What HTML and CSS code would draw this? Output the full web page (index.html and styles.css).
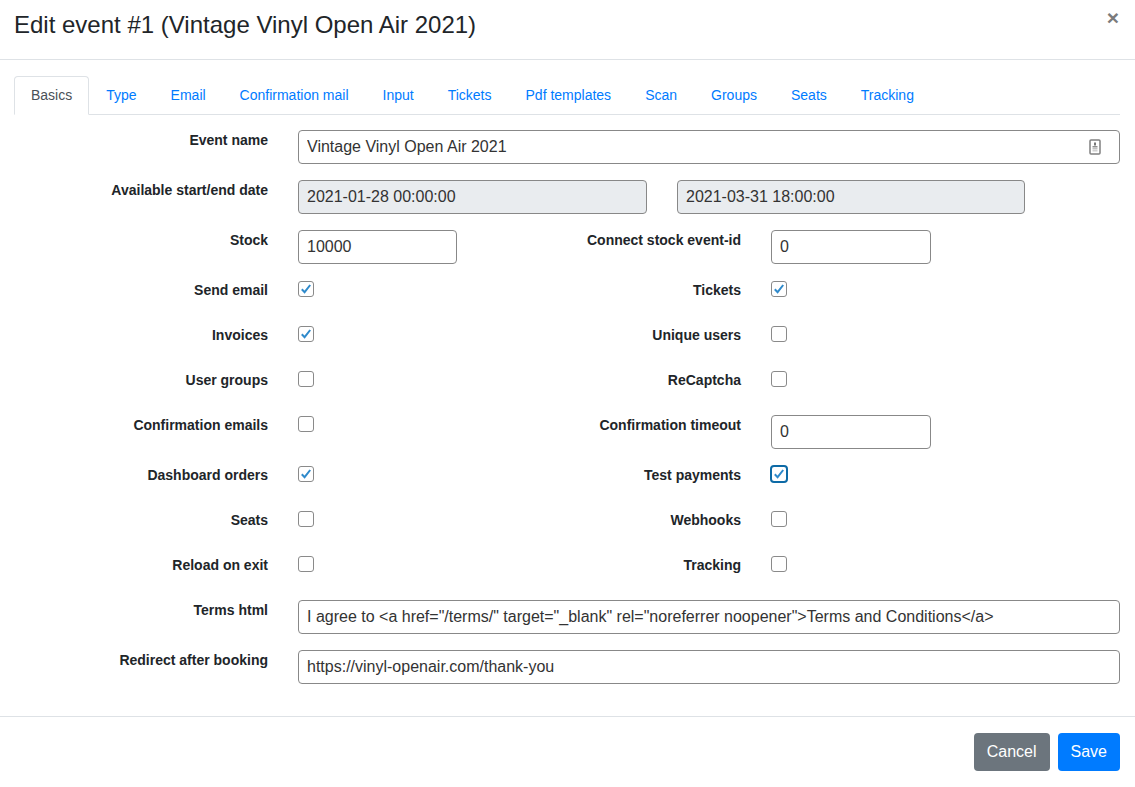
FILE: index.html
```html
<!DOCTYPE html>
<html lang="en">
<head>
    <meta charset="UTF-8">
    <title>Edit event</title>
    <link rel="stylesheet" href="styles.css">
</head>
<body>
    <div class="modal">
        <div class="modal-header">
            <h5 class="modal-title">Edit event #1 (Vintage Vinyl Open Air 2021)</h5>
            <span class="close">&times;</span>
        </div>
        <div class="modal-body">
            <ul class="tabs">
                <li class="tab active">Basics</li>
                <li class="tab">Type</li>
                <li class="tab">Email</li>
                <li class="tab">Confirmation mail</li>
                <li class="tab">Input</li>
                <li class="tab">Tickets</li>
                <li class="tab">Pdf templates</li>
                <li class="tab">Scan</li>
                <li class="tab">Groups</li>
                <li class="tab">Seats</li>
                <li class="tab">Tracking</li>
            </ul>

            <div class="row">
                <label class="lbl">Event name</label>
                <div class="field-wrap">
                    <input class="input" type="text" value="Vintage Vinyl Open Air 2021">
                    <svg class="contact-icon" width="12" height="16" viewBox="0 0 12 16">
                        <rect x="1" y="1" width="10" height="14" rx="1" fill="#fff" stroke="#808080" stroke-width="1.5"/>
                        <rect x="5" y="3.5" width="2" height="3" fill="#777"/>
                        <rect x="3.5" y="7" width="5" height="1.5" fill="#8f8f8f"/>
                        <rect x="3.5" y="9" width="5" height="1.5" fill="#c0c0c0"/>
                        <rect x="3.5" y="11" width="5" height="1.5" fill="#d0d0d0"/>
                    </svg>
                </div>
            </div>

            <div class="row">
                <label class="lbl">Available start/end date</label>
                <div class="dates">
                    <input class="input" type="text" value="2021-01-28 00:00:00" readonly>
                    <input class="input" type="text" value="2021-03-31 18:00:00" readonly>
                </div>
            </div>

            <div class="row">
                <label class="lbl">Stock</label>
                <div class="col"><input class="input short" type="text" value="10000"></div>
                <label class="lbl">Connect stock event-id</label>
                <div class="col"><input class="input short" type="text" value="0"></div>
            </div>

            <div class="row check-row">
                <label class="lbl">Send email</label>
                <div class="col"><span class="check checked"></span></div>
                <label class="lbl">Tickets</label>
                <div class="col"><span class="check checked"></span></div>
            </div>

            <div class="row check-row">
                <label class="lbl">Invoices</label>
                <div class="col"><span class="check checked"></span></div>
                <label class="lbl">Unique users</label>
                <div class="col"><span class="check"></span></div>
            </div>

            <div class="row check-row">
                <label class="lbl">User groups</label>
                <div class="col"><span class="check"></span></div>
                <label class="lbl">ReCaptcha</label>
                <div class="col"><span class="check"></span></div>
            </div>

            <div class="row">
                <label class="lbl">Confirmation emails</label>
                <div class="col"><span class="check"></span></div>
                <label class="lbl">Confirmation timeout</label>
                <div class="col"><input class="input short" type="text" value="0"></div>
            </div>

            <div class="row check-row">
                <label class="lbl">Dashboard orders</label>
                <div class="col"><span class="check checked"></span></div>
                <label class="lbl">Test payments</label>
                <div class="col"><span class="check checked focus"></span></div>
            </div>

            <div class="row check-row">
                <label class="lbl">Seats</label>
                <div class="col"><span class="check"></span></div>
                <label class="lbl">Webhooks</label>
                <div class="col"><span class="check"></span></div>
            </div>

            <div class="row check-row">
                <label class="lbl">Reload on exit</label>
                <div class="col"><span class="check"></span></div>
                <label class="lbl">Tracking</label>
                <div class="col"><span class="check"></span></div>
            </div>

            <div class="row">
                <label class="lbl">Terms html</label>
                <input class="input" type="text" value='I agree to &lt;a href="/terms/" target="_blank" rel="noreferrer noopener"&gt;Terms and Conditions&lt;/a&gt;'>
            </div>

            <div class="row">
                <label class="lbl">Redirect after booking</label>
                <input class="input" type="text" value="https://vinyl-openair.com/thank-you">
            </div>
        </div>
        <div class="modal-footer">
            <button class="btn btn-cancel">Cancel</button>
            <button class="btn btn-save">Save</button>
        </div>
    </div>
</body>
</html>
```

FILE: styles.css
```css
* {
    box-sizing: border-box;
}

html, body {
    margin: 0;
    padding: 0;
    height: 100%;
    overflow: hidden;
}

body {
    font-family: "Liberation Sans", Arial, sans-serif;
    font-size: 14px;
    line-height: 21px;
    color: #212529;
    background-color: #fff;
}

.modal-header {
    display: flex;
    justify-content: space-between;
    height: 60px;
    padding: 7px 16px 0 14px;
    border-bottom: 1px solid #dee2e6;
}

.modal-title {
    margin: 0;
    font-size: 24px;
    line-height: 36px;
    font-weight: 400;
}

.close {
    font-size: 21px;
    line-height: 21px;
    font-weight: 700;
    color: #7b7b7b;
}

.modal-body {
    padding: 16px 15px;
}

.tabs {
    display: flex;
    list-style: none;
    margin: 0 0 15px;
    padding: 0;
    height: 39px;
    border-bottom: 1px solid #dee2e6;
}

.tab {
    height: 39px;
    padding: 8px 16px 0;
    border: 1px solid transparent;
    border-radius: 4px 4px 0 0;
    color: #007bff;
}

.tab.active {
    color: #495057;
    background-color: #fff;
    border-color: #dee2e6 #dee2e6 #fff;
    margin-left: -1px;
}

.row {
    display: flex;
    margin-bottom: 16px;
}

.check-row {
    height: 29px;
}

.lbl {
    flex: 0 0 253px;
    text-align: right;
    font-weight: 700;
}

.col {
    flex: 0 0 220px;
    margin-left: 30px;
}

.col + .lbl {
    flex-basis: 223px;
}

.row > .input,
.field-wrap,
.dates {
    margin-left: 30px;
    flex: 1;
}

.input {
    display: block;
    width: 100%;
    height: 34px;
    padding: 0 8px;
    font-family: inherit;
    font-size: 16px;
    color: #333;
    background-color: #fff;
    border: 1px solid #888;
    border-radius: 4px;
    outline: none;
}

.input.short {
    width: 159px;
}

.col:last-child .input.short {
    width: 160px;
}

.field-wrap {
    position: relative;
}

.contact-icon {
    position: absolute;
    right: 19px;
    top: 9px;
}

.dates {
    display: flex;
    gap: 30px;
}

.dates .input {
    width: 349px;
    background-color: #e9ecef;
}

.dates .input:last-child {
    width: 348px;
}

.check {
    display: block;
    width: 16px;
    height: 16px;
    margin-top: 1px;
    border: 1px solid #8a8a8a;
    border-radius: 3px;
    background-color: #fff;
}

.check.checked {
    background: #fff url("data:image/svg+xml,%3Csvg xmlns='http://www.w3.org/2000/svg' viewBox='0 0 14 14'%3E%3Cpath d='M2.8 7.2 5.6 10.2 11.2 3' fill='none' stroke='%232f8acb' stroke-width='2'/%3E%3C/svg%3E") center no-repeat;
}

.check.focus {
    width: 18px;
    height: 18px;
    margin: 0 0 0 -1px;
    border: 2px solid #0d6aa6;
    border-radius: 4px;
}

.modal-footer {
    display: flex;
    justify-content: flex-end;
    gap: 8px;
    padding: 16px 15px;
    border-top: 1px solid #dee2e6;
}

.btn {
    height: 38px;
    padding: 0 12px;
    font-family: inherit;
    font-size: 16px;
    color: #fff;
    border: 1px solid transparent;
    border-radius: 4px;
}

.btn-cancel {
    background-color: #6c757d;
}

.btn-save {
    background-color: #007bff;
}
```
